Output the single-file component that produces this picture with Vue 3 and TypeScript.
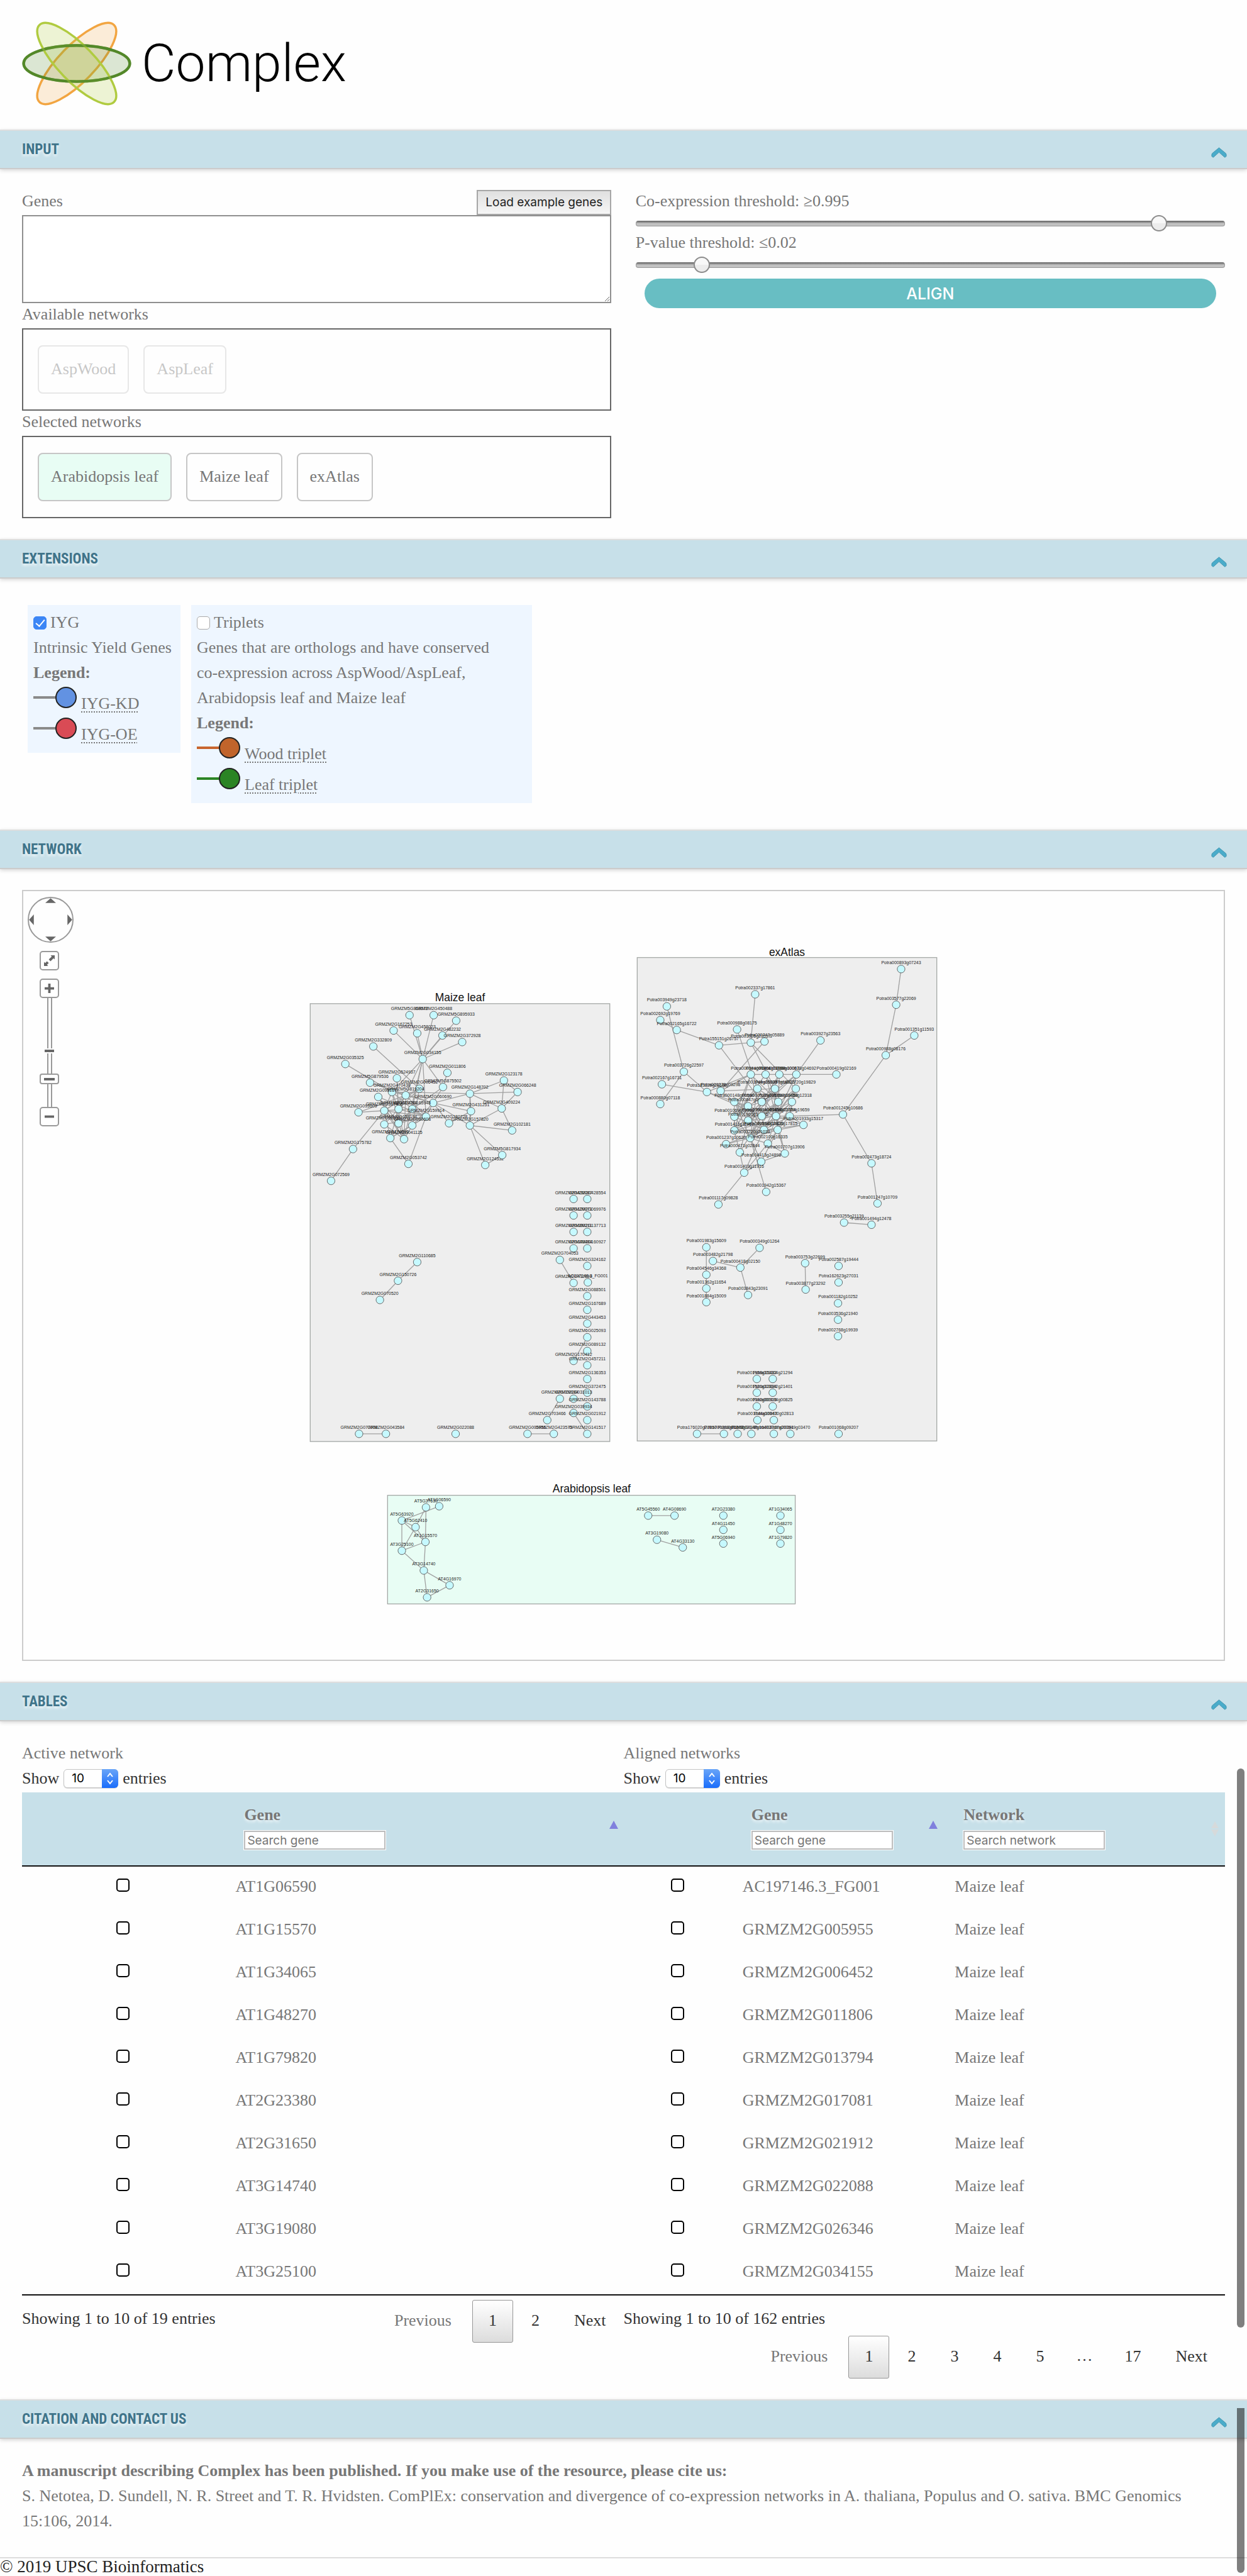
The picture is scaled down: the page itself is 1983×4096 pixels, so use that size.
<script setup lang="ts">
import { reactive, ref } from 'vue'

type Edge = [number, number]
interface GraphNode { x: number; y: number; label: string }
interface Panel {
  title: string
  titleX: number
  titleY: number
  x: number
  y: number
  width: number
  height: number
  fill: string
  nodes: GraphNode[]
  edges: { x1: number; y1: number; x2: number; y2: number }[]
}

const open = reactive({ input: true, extensions: true, network: true, tables: true, citation: true })
const genes = ref('')
const coexpression = ref(90)
const pvalue = ref(10)
const zoomLevel = ref(23)
const iyg = ref(true)
const triplets = ref(false)

const available = ['AspWood', 'AspLeaf']
const selected = [
  { name: 'Arabidopsis leaf', active: true },
  { name: 'Maize leaf', active: false },
  { name: 'exAtlas', active: false },
]

const activeGenes = [
  'AT1G06590', 'AT1G15570', 'AT1G34065', 'AT1G48270', 'AT1G79820',
  'AT2G23380', 'AT2G31650', 'AT3G14740', 'AT3G19080', 'AT3G25100',
]
const alignedGenes = [
  'AC197146.3_FG001', 'GRMZM2G005955', 'GRMZM2G006452', 'GRMZM2G011806', 'GRMZM2G013794',
  'GRMZM2G017081', 'GRMZM2G021912', 'GRMZM2G022088', 'GRMZM2G026346', 'GRMZM2G034155',
]

// A layout grid: origin on the canvas and number of grid steps per canvas unit.
interface Grid { ox: number; oy: number; sx: number; sy: number }

function buildPanel(
  title: string, fill: string, grid: Grid, box: number[], titleAt: number[],
  prefix: string, nodeText: string, edgeText: string,
): Panel {
  const px = (x: number) => Math.round(grid.ox + x / grid.sx)
  const py = (y: number) => Math.round(grid.oy + y / grid.sy)
  const nodes = nodeText.trim().split(/\s+/).map((item) => {
    const [x, y, id] = item.split(',')
    return { x: px(+x), y: py(+y), label: id.startsWith('=') ? id.slice(1) : prefix + id }
  })
  const edges = edgeText.trim().split(/\s+/).map((pair) => {
    const [a, b] = pair.split('-').map(Number) as Edge
    return { x1: nodes[a].x, y1: nodes[a].y, x2: nodes[b].x, y2: nodes[b].y }
  })
  const x = px(box[0])
  const y = py(box[1])
  return {
    title, fill, nodes, edges, x, y,
    titleX: px(titleAt[0]), titleY: py(titleAt[1]),
    width: px(box[2]) - x, height: py(box[3]) - y,
  }
}

const maize = buildPanel(
  'Maize leaf', '#eeeeee', { ox: 550, oy: 1780, sx: 2.751, sy: 3 },
  [41, 144, 1544, 2537], [793, 133], 'GRMZM',
  `540,207,5G868679 659,207,2G450488 774,236,5G895933 459,291,2G167253 577,305,2G458023
   705,317,2G482232 803,355,2G372928 358,378,2G332809 606,448,2G034155 217,474,2G035325
   728,523,2G011806 476,552,2G524937 340,575,5G879536 590,608,2G006452 707,599,5G875502
   452,628,2G470438 521,645,5G819204 383,653,2G098167 843,636,2G148702 1011,564,2G123178
   1080,628,2G066248 1002,717,2G409224 846,732,2G431251 657,686,2G060690 284,738,2G093609
   414,729,2G317406 484,720,2G013794 552,720,2G165948 622,761,2G159914 414,805,2G020317
   484,797,2G158194 552,810,2G080608 737,797,2G180728 843,810,2G157820 1054,836,2G102181
   444,880,2G174596 513,886,2G041125 257,938,2G175782 534,1020,2G053742 920,1025,2G124532
   1005,973,5G817934 146,1112,2G072569
   1362,1211,2G432087 1431,1211,2G428554 1362,1301,2G120071 1431,1301,2G069976
   1362,1391,2G080211 1431,1391,2G137713 1362,1481,2G043484 1431,1481,2G160927
   1293,1545,2G704053 1431,1577,2G324162 1362,1670,2G412899 1433,1667,=AC197146.3_FG001
   1431,1742,2G088501 1431,1818,2G167689 1431,1894,2G443453 1431,1969,6G025093
   1431,2044,2G089132 1362,2097,2G170412 1431,2120,2G457211 1431,2195,2G136353
   1431,2271,2G372475 1293,2305,2G702184 1362,2305,2G031013 1431,2347,2G143788
   1362,2382,2G039934 1431,2422,2G021912 1229,2422,2G703466 286,2497,2G077008
   420,2497,2G043584 771,2497,2G022088 1131,2497,2G005955 1264,2497,2G423575
   1431,2497,2G141517 577,1556,2G110685 481,1658,2G150726 390,1763,2G070520`,
  `0-8 1-8 2-8 3-8 4-8 5-8 6-8 7-13 8-14 8-28 8-26 8-15 8-36 8-27 9-15 10-14 14-27 14-23
   11-26 11-30 12-16 12-23 13-16 13-25 13-31 13-26 15-18 15-16 15-30 15-27 15-26 15-25
   16-23 16-26 16-25 16-28 16-36 17-28 17-30 17-36 18-19 18-20 18-22 18-21 18-23 18-33
   19-20 19-21 20-21 21-33 21-34 22-23 22-32 22-33 23-32 23-33 23-31 23-28 24-25 24-16
   25-28 25-30 25-36 25-35 25-27 26-28 26-35 26-36 26-29 27-30 27-35 27-28 28-29 28-31
   28-35 28-38 28-30 29-36 30-36 31-35 31-36 33-34 33-39 33-40 39-40 35-38 37-25 37-41
   50-52 57-59 63-68 66-74 69-70 72-73 75-76 76-77`,
)

const exAtlas = buildPanel(
  'exAtlas', '#eeeeee', { ox: 1150, oy: 1700, sx: 2.751, sy: 3 },
  [31, 133, 1531, 2776], [781, 124], 'Potra',
  `1353,194,000893g07243 621,333,002337g17861 180,400,003949g23718 145,475,002692g19769
   228,528,002165g16722 531,525,000988g08175 600,598,003926g23537 669,592,000747g05889
   441,612,155151g26757 949,586,003927g23563 1329,389,003577g22069 1420,557,001351g11593
   1276,667,000988g08176 265,757,003726g22597 155,824,002167g16731 145,932,000880g07118
   600,772,000344g01204 674,772,000401g01804 743,772,003198g10083 827,772,000678g04692
   1029,772,000419g02169 634,848,001944g15380 720,848,000357g18023 824,848,002720g19829
   379,867,183129g28160 448,861,001278g09298 518,920,000148g00590 587,946,000847g06830
   655,922,000522g03519 736,922,001719g14058 805,922,001468g12318 518,1001,001069g09208
   587,1022,001866g14936 656,998,000916g07459 725,998,003459g21654 794,998,002709g19659
   864,1048,001933g15317 518,1076,001411g11967 666,1074,002584g19420 735,1074,002320g17815
   597,1120,003220g21038 475,1152,001237g10620 685,1149,002100g16335 544,1196,000471g02844
   770,1202,001707g13906 653,1248,004413g24898 568,1309,001403g11916 677,1413,001942g15367
   437,1483,001117g09828 1061,990,001245g10686 1205,1257,002473g18724 1236,1477,001247g10709
   1068,1582,003255g21139 1205,1594,001494g12478 377,1715,001983g15609 411,1791,003482g21798
   645,1718,000349g01264 547,1828,000418g02150 377,1866,004546g34368 377,1942,001362g11654
   377,2017,001884g15009 586,1977,003843g23091 871,1802,003753g22699 874,1948,003877g23292
   1039,1817,002587g19444 1039,1907,162623g27031 1037,2023,001182g10252 1037,2113,003536g21940
   1037,2203,002768g19939 629,2435,001958g15432 711,2435,003304g21294 629,2511,001520g12834
   711,2511,003342g21401 629,2586,000392g00915 711,2586,000194g00825 632,2661,001244g10843
   714,2661,000470g02813 331,2737,176020g27857 464,2737,000383g01672 533,2737,001243g04140
   602,2737,002142g16402 714,2737,001267g20341 797,2737,000549g03470 1039,2737,001068g09207`,
  `0-10 10-12 11-12 12-49 49-35 49-50 50-51 52-53 1-6 2-13 3-4 4-8 8-6 6-7 5-21 8-28 7-25
   6-22 6-23 9-19 16-17 17-18 18-19 19-20 13-15 13-24 14-24 24-16 24-27 24-33 25-22 25-26
   25-16 16-31 16-37 16-29 16-33 17-31 17-34 17-29 18-33 18-39 18-28 19-28 19-34 19-32
   19-35 21-31 21-34 21-29 21-40 22-34 22-27 22-39 22-32 23-35 23-34 23-33 23-38 26-33
   26-32 26-37 26-40 26-38 26-34 27-28 27-34 27-37 27-38 28-34 28-37 28-40 29-33 29-39
   29-37 29-40 29-38 29-34 30-34 30-39 30-33 30-38 30-35 31-33 31-37 31-38 31-40 32-34
   32-38 32-43 33-38 33-40 33-34 33-43 34-35 34-39 34-40 34-42 34-44 35-38 35-37 35-39
   36-35 36-39 36-34 36-38 37-38 37-39 37-43 38-39 38-40 38-46 39-40 39-44 39-42 39-45
   40-42 40-45 40-47 41-38 41-40 42-44 43-46 45-44 46-45 46-48 42-46
   54-58 58-59 59-60 55-57 56-57 57-61 62-63 77-78`,
)

const arabidopsis = buildPanel(
  'Arabidopsis leaf', '#e8fdf4', { ox: 690, oy: 2690, sx: 2.01, sy: 3 },
  [33, 102, 1525, 697], [779, 88], 'AT',
  `172,168,5G37630 222,162,1G06590 84,241,5G63920 135,275,5G62410 170,357,1G15570
   84,404,3G25100 164,513,3G14740 259,595,4G16970 176,659,2G31650 987,214,5G45560
   1084,214,4G08690 1263,214,2G23380 1263,290,4G11450 1263,365,5G06940 1471,214,1G34065
   1471,290,1G48270 1471,365,1G79820 1019,345,3G19080 1114,386,4G33130`,
  '0-4 0-3 1-2 2-3 2-4 2-5 3-5 3-4 4-5 4-6 5-6 6-8 6-7 7-8 9-10 17-18',
)

const panels = [maize, exAtlas, arabidopsis]
</script>

<template>
  <div class="page">
    <header class="brand">
      <svg class="logo" viewBox="0 0 200 154" aria-hidden="true">
        <ellipse cx="100" cy="77" rx="98" ry="33" transform="rotate(-46 100 77)" fill="#f2a541" fill-opacity=".2" stroke="#f2a541" stroke-width="4" />
        <ellipse cx="100" cy="77" rx="97" ry="33" fill="#4f8726" fill-opacity=".2" stroke="#54882a" stroke-width="5" />
        <ellipse cx="100" cy="77" rx="98" ry="33" transform="rotate(46 100 77)" fill="#b0cb40" fill-opacity=".22" stroke="#b0cb40" stroke-width="4" />
        <ellipse cx="100" cy="77" rx="97" ry="33" fill="none" stroke="#54882a" stroke-width="5" stroke-opacity=".6" />
      </svg>
      <span class="wordmark">Complex</span>
    </header>

    <section>
      <div class="bar">
        <h2>INPUT</h2>
        <button type="button" class="toggle" aria-label="Collapse input" @click="open.input = !open.input">
          <svg viewBox="0 0 28 19"><path d="M14 1 26 11Q27 12 27 14V16Q26 18 24 18L14 9 4 18Q2 18 1 16V14Q1 12 2 11Z" /></svg>
        </button>
      </div>
      <div v-show="open.input" class="body columns">
        <div>
          <div class="genes-head">
            <label class="caption" for="genes">Genes</label>
            <button type="button" class="load">Load example genes</button>
          </div>
          <textarea id="genes" v-model="genes"></textarea>
          <div class="caption">Available networks</div>
          <div class="tray">
            <div v-for="name in available" :key="name" class="chip faded">{{ name }}</div>
          </div>
          <div class="caption">Selected networks</div>
          <div class="tray">
            <div v-for="net in selected" :key="net.name" class="chip" :class="{ active: net.active }">{{ net.name }}</div>
          </div>
        </div>
        <div>
          <label class="caption" for="coexp">Co-expression threshold: ≥0.995</label>
          <input id="coexp" v-model="coexpression" class="threshold" type="range" min="0" max="100">
          <label class="caption second" for="pval">P-value threshold: ≤0.02</label>
          <input id="pval" v-model="pvalue" class="threshold" type="range" min="0" max="100">
          <button type="button" class="align">ALIGN</button>
        </div>
      </div>
    </section>

    <section>
      <div class="bar">
        <h2>EXTENSIONS</h2>
        <button type="button" class="toggle" aria-label="Collapse extensions" @click="open.extensions = !open.extensions">
          <svg viewBox="0 0 28 19"><path d="M14 1 26 11Q27 12 27 14V16Q26 18 24 18L14 9 4 18Q2 18 1 16V14Q1 12 2 11Z" /></svg>
        </button>
      </div>
      <div v-show="open.extensions" class="body extensions">
        <div class="extension">
          <label class="option"><input v-model="iyg" type="checkbox" class="mac-check">IYG</label>
          <div>Intrinsic Yield Genes</div>
          <b>Legend:</b>
          <div class="legend">
            <svg viewBox="0 0 70 34"><path d="M0 17H40" stroke="#8a8a8a" stroke-width="4" /><circle cx="52" cy="17" r="16" fill="#6292e2" stroke="#222" stroke-width="2" /></svg>
            <span class="term">IYG-KD</span>
          </div>
          <div class="legend">
            <svg viewBox="0 0 70 34"><path d="M0 17H40" stroke="#8a8a8a" stroke-width="4" /><circle cx="52" cy="17" r="16" fill="#d94b55" stroke="#222" stroke-width="2" /></svg>
            <span class="term">IYG-OE</span>
          </div>
        </div>
        <div class="extension wide">
          <label class="option"><input v-model="triplets" type="checkbox" class="mac-check">Triplets</label>
          <div>Genes that are orthologs and have conserved<br>co-expression across AspWood/AspLeaf,<br>Arabidopsis leaf and Maize leaf</div>
          <b>Legend:</b>
          <div class="legend">
            <svg viewBox="0 0 70 34"><path d="M0 17H40" stroke="#c8652d" stroke-width="4" /><circle cx="52" cy="17" r="16" fill="#c1642b" stroke="#222" stroke-width="2" /></svg>
            <span class="term">Wood triplet</span>
          </div>
          <div class="legend">
            <svg viewBox="0 0 70 34"><path d="M0 17H40" stroke="#2b8424" stroke-width="4" /><circle cx="52" cy="17" r="16" fill="#2b8424" stroke="#222" stroke-width="2" /></svg>
            <span class="term">Leaf triplet</span>
          </div>
        </div>
      </div>
    </section>

    <section>
      <div class="bar">
        <h2>NETWORK</h2>
        <button type="button" class="toggle" aria-label="Collapse network" @click="open.network = !open.network">
          <svg viewBox="0 0 28 19"><path d="M14 1 26 11Q27 12 27 14V16Q26 18 24 18L14 9 4 18Q2 18 1 16V14Q1 12 2 11Z" /></svg>
        </button>
      </div>
      <div v-show="open.network" class="body">
        <div class="canvas">
          <svg class="graph" viewBox="42 1623 2188 1401">
            <g v-for="panel in panels" :key="panel.title">
              <rect :x="panel.x" :y="panel.y" :width="panel.width" :height="panel.height" :fill="panel.fill" stroke="#a4a8a6" stroke-width="1.5" />
              <text class="panel-title" :x="panel.titleX" :y="panel.titleY">{{ panel.title }}</text>
              <line v-for="(edge, i) in panel.edges" :key="i" v-bind="edge" stroke="#a0a0a0" stroke-width="1.5" />
              <g v-for="(node, i) in panel.nodes" :key="'n' + i">
                <circle :cx="node.x" :cy="node.y" r="7" fill="#c6f9ff" stroke="#555" stroke-width="1" />
                <text class="node-label" :x="node.x" :y="node.y - 9">{{ node.label }}</text>
              </g>
            </g>
          </svg>
          <div class="panzoom">
            <div class="pan">
              <button type="button" class="up" aria-label="Pan up"><svg viewBox="0 0 18 8"><path d="M9 0 18 8H0Z" /></svg></button>
              <button type="button" class="left" aria-label="Pan left"><svg viewBox="0 0 8 18"><path d="M0 9 8 0V18Z" /></svg></button>
              <button type="button" class="right" aria-label="Pan right"><svg viewBox="0 0 8 18"><path d="M8 9 0 0V18Z" /></svg></button>
              <button type="button" class="down" aria-label="Pan down"><svg viewBox="0 0 18 8"><path d="M9 8 0 0H18Z" /></svg></button>
            </div>
            <button type="button" class="square fit" aria-label="Fit network">
              <svg viewBox="0 0 18 18"><path d="M11 0H18V7L16 5 11 10 8 7 13 2ZM7 18H0V11L2 13 5 10 8 13 5 16Z" /></svg>
            </button>
            <div class="zoom">
              <button type="button" class="square" aria-label="Zoom in"><svg viewBox="0 0 16 16"><path d="M6 0H10V6H16V10H10V16H6V10H0V6H6Z" /></svg></button>
              <div class="rail">
                <input v-model="zoomLevel" type="range" min="0" max="100" aria-label="Zoom level">
                <i class="tick"></i>
              </div>
              <button type="button" class="square" aria-label="Zoom out"><svg viewBox="0 0 16 16"><path d="M0 6H16V10H0Z" /></svg></button>
            </div>
          </div>
        </div>
      </div>
    </section>

    <section class="tables">
      <div class="bar">
        <h2>TABLES</h2>
        <button type="button" class="toggle" aria-label="Collapse tables" @click="open.tables = !open.tables">
          <svg viewBox="0 0 28 19"><path d="M14 1 26 11Q27 12 27 14V16Q26 18 24 18L14 9 4 18Q2 18 1 16V14Q1 12 2 11Z" /></svg>
        </button>
      </div>
      <div v-show="open.tables" class="body halves">
        <div>
          <div class="caption">Active network</div>
          <label class="length">Show
            <span class="select"><select><option>10</option><option>25</option></select>
              <svg viewBox="0 0 26 30"><path d="M9 12 13 7 17 12M9 18 13 23 17 18" /></svg></span>
            entries</label>
          <table>
            <colgroup><col class="a1"><col></colgroup>
            <thead>
              <tr>
                <th></th>
                <th><div>Gene</div><input type="text" placeholder="Search gene" aria-label="Search gene"><svg class="sort" viewBox="0 0 14 26"><path d="M7 0 14 13H0Z" /></svg></th>
              </tr>
            </thead>
            <tbody>
              <tr v-for="gene in activeGenes" :key="gene">
                <td class="pick"><input type="checkbox" :aria-label="gene"></td>
                <td>{{ gene }}</td>
              </tr>
            </tbody>
          </table>
          <div class="table-foot">
            <div class="info">Showing 1 to 10 of 19 entries</div>
            <nav class="pager">
              <button type="button" class="muted">Previous</button>
              <button type="button" class="current">1</button>
              <button type="button">2</button>
              <button type="button">Next</button>
            </nav>
          </div>
        </div>
        <div>
          <div class="caption">Aligned networks</div>
          <label class="length">Show
            <span class="select"><select><option>10</option><option>25</option></select>
              <svg viewBox="0 0 26 30"><path d="M9 12 13 7 17 12M9 18 13 23 17 18" /></svg></span>
            entries</label>
          <table>
            <colgroup><col class="b1"><col class="b2"><col></colgroup>
            <thead>
              <tr>
                <th></th>
                <th><div>Gene</div><input type="text" placeholder="Search gene" aria-label="Search aligned gene"><svg class="sort" viewBox="0 0 14 26"><path d="M7 0 14 13H0Z" /></svg></th>
                <th><div>Network</div><input type="text" placeholder="Search network" aria-label="Search network"><svg class="sort both" viewBox="0 0 14 26"><path d="M7 1 13 12H1ZM7 25 13 14H1Z" /></svg></th>
              </tr>
            </thead>
            <tbody>
              <tr v-for="gene in alignedGenes" :key="gene">
                <td class="pick"><input type="checkbox" :aria-label="gene"></td>
                <td>{{ gene }}</td>
                <td>Maize leaf</td>
              </tr>
            </tbody>
          </table>
          <div class="table-foot">
            <div class="info">Showing 1 to 10 of 162 entries</div>
            <nav class="pager">
              <button type="button" class="muted">Previous</button>
              <button type="button" class="current">1</button>
              <button v-for="n in [2, 3, 4, 5]" :key="n" type="button">{{ n }}</button>
              <span>…</span>
              <button type="button">17</button>
              <button type="button">Next</button>
            </nav>
          </div>
        </div>
      </div>
      <div class="scroll-thumb"></div>
    </section>

    <div class="closing">
      <section>
        <div class="bar">
          <h2>CITATION AND CONTACT US</h2>
          <button type="button" class="toggle" aria-label="Collapse citation" @click="open.citation = !open.citation">
            <svg viewBox="0 0 28 19"><path d="M14 1 26 11Q27 12 27 14V16Q26 18 24 18L14 9 4 18Q2 18 1 16V14Q1 12 2 11Z" /></svg>
          </button>
        </div>
        <div v-show="open.citation" class="body citation">
          <b>A manuscript describing Complex has been published. If you make use of the resource, please cite us:</b>
          <div>S. Netotea, D. Sundell, N. R. Street and T. R. Hvidsten. ComPlEx: conservation and divergence of co-expression networks in A. thaliana, Populus and O. sativa. BMC Genomics 15:106, 2014.</div>
        </div>
      </section>
      <footer>© 2019 UPSC Bioinformatics</footer>
      <div class="scroll-thumb"></div>
    </div>
  </div>
</template>

<style>
body {
  background: #fefefe;
}
</style>

<style scoped>
.page {
  font: 26px/40px "Liberation Serif", serif;
  color: #777;
}
.page * {
  box-sizing: border-box;
}
button {
  font: inherit;
  color: inherit;
  cursor: pointer;
}
.brand {
  display: flex;
  align-items: center;
  gap: 16px;
  height: 206px;
  padding: 0 35px 4px;
}
.logo {
  width: 174px;
}
.wordmark {
  font: 300 84px/96px Roboto, "Liberation Sans", sans-serif;
  color: #000;
}
.bar {
  display: flex;
  align-items: center;
  justify-content: space-between;
  height: 63px;
  padding: 0 32px 0 35px;
  background: #c7e0e9;
  border-top: 2px solid #dedede;
  border-bottom: 2px solid #ccc;
  box-shadow: 0 2px 6px rgba(0, 0, 0, .16);
}
.bar h2 {
  margin: 0;
  font: 700 23px/40px "Roboto Condensed", "Open Sans Condensed", Roboto, sans-serif;
  color: #3f748a;
  text-shadow: 0 3px 4px rgba(255, 255, 255, .8);
}
.toggle {
  display: flex;
  margin-top: 9px;
  padding: 0;
  border: 0;
  background: none;
}
.toggle svg {
  width: 25px;
  height: 17px;
  fill: #4aacca;
  stroke: #3f90ab;
}
.body {
  padding: 33px 35px;
}
.columns {
  display: grid;
  grid-template-columns: 49fr 49fr;
  gap: 0 2%;
}
.caption {
  display: block;
  line-height: 36px;
  padding-bottom: 4px;
}
.genes-head {
  display: flex;
  justify-content: space-between;
}
.load {
  height: 40px;
  padding: 0 12px;
  border: 2px solid #a6a6a6;
  background: linear-gradient(#e0e0e0, #f6f6f6);
  color: #222;
  font: 19px/24px Inter, sans-serif;
}
textarea {
  display: block;
  width: 100%;
  height: 140px;
  border: 2px solid #8f8f8f;
  background: #fff;
  font: inherit;
  outline: 0;
}
.tray {
  display: flex;
  gap: 23px;
  height: 131px;
  padding: 25px 23px;
  border: 2px solid #666;
}
.chip {
  height: 77px;
  padding: 16px 19px;
  border: 2px solid #c6c6c6;
  border-radius: 8px;
  background: #fefefe;
}
.chip.faded {
  opacity: .4;
}
.chip.active {
  background: #e8fdf4;
}
.threshold {
  display: block;
  width: 100%;
  height: 26px;
  margin: 0;
  appearance: none;
  background: none;
}
.threshold::-webkit-slider-runnable-track {
  height: 9px;
  border-radius: 4px;
  border: 1px solid #999;
  border-top-color: #6e6e6e;
  background: linear-gradient(#6f6f6f, #c2c2c2 50%);
}
.threshold::-webkit-slider-thumb {
  appearance: none;
  width: 26px;
  height: 26px;
  margin-top: -10px;
  border: 2px solid #8c8c8c;
  border-radius: 50%;
  background: linear-gradient(#f8f8f8 50%, #ececec 50%);
}
.align {
  display: block;
  width: calc(100% - 28px);
  height: 47px;
  margin: 9px 14px 0;
  border: 0;
  border-radius: 24px;
  background: #68bec3;
  color: #fff;
  font: 500 25px/47px Inter, sans-serif;
}
.extensions {
  display: flex;
  align-items: flex-start;
  gap: 17px;
  padding: 42px 44px;
}
.extension {
  min-width: 243px;
  padding: 8px 9px 9px;
  background: #eef6ff;
}
.extension.wide {
  width: 542px;
}
.extension b {
  display: block;
}
.option {
  display: flex;
  align-items: center;
  gap: 6px;
}
.mac-check {
  appearance: none;
  width: 21px;
  height: 21px;
  margin: 0;
  border: 1px solid #aaa;
  border-radius: 5px;
  background: #fff;
}
.mac-check:checked {
  border-color: #3c86f5;
  background: #3c86f5;
}
.mac-check:checked::after {
  content: "";
  display: block;
  width: 6px;
  height: 12px;
  margin: 1px 6px;
  border: solid #fff;
  border-width: 0 2px 2px 0;
  transform: rotate(40deg);
}
.legend {
  display: flex;
  align-items: flex-end;
  gap: 6px;
  height: 49px;
}
.legend svg {
  width: 70px;
  height: 34px;
  margin-bottom: 13px;
}
.term {
  text-decoration: underline dotted 2px;
  text-underline-offset: 4px;
}
.canvas {
  position: relative;
  border: 2px solid #ccc;
}
.graph {
  display: block;
  width: 100%;
}
.panel-title {
  font: 20px "Liberation Sans", sans-serif;
  text-anchor: middle;
  fill: #111;
}
.node-label {
  font: 8px "Liberation Sans", sans-serif;
  text-anchor: middle;
  fill: #222;
}
.panzoom {
  position: absolute;
  left: 7px;
  top: 9px;
}
.pan {
  position: relative;
  width: 73px;
  height: 73px;
  border: 2px solid #999;
  border-radius: 50%;
}
.pan button {
  position: absolute;
  display: flex;
  padding: 0;
  border: 0;
  background: none;
}
.pan svg,
.square svg {
  fill: #666;
}
.up svg,
.down svg {
  width: 17px;
  height: 8px;
}
.left svg,
.right svg {
  width: 8px;
  height: 17px;
}
.up { top: 0; left: 26px; }
.down { bottom: 0; left: 26px; }
.left { left: 0; top: 26px; }
.right { right: 0; top: 26px; }
.square {
  display: flex;
  align-items: center;
  justify-content: center;
  width: 31px;
  height: 31px;
  padding: 0;
  border: 2px solid #999;
  border-radius: 5px;
  background: #fff;
}
.square svg {
  width: 15px;
  height: 15px;
}
.fit {
  margin: 13px 0 13px 19px;
}
.fit svg {
  width: 17px;
  height: 17px;
}
.zoom {
  width: 31px;
  margin-left: 19px;
}
.rail {
  position: relative;
  height: 173px;
}
.rail input {
  display: block;
  width: 31px;
  height: 173px;
  margin: 0;
  appearance: none;
  writing-mode: vertical-lr;
  direction: rtl;
  background: none;
}
.rail input::-webkit-slider-runnable-track {
  width: 8px;
  height: 173px;
  border: solid #999;
  border-width: 0 2px;
}
.rail input::-webkit-slider-thumb {
  appearance: none;
  width: 31px;
  height: 17px;
  margin-left: -14px;
  border: 2px solid #999;
  border-radius: 4px;
  background: linear-gradient(#666, #666) center / 17px 4px no-repeat #fff;
}
.tick {
  position: absolute;
  left: 8px;
  top: 80px;
  width: 15px;
  height: 8px;
  border: solid #fff;
  border-width: 2px 0;
  background: #666;
}
.tables,
.closing {
  position: relative;
}
.halves {
  display: grid;
  grid-template-columns: 1fr 1fr;
}
.length {
  display: flex;
  align-items: center;
  gap: 7px;
  line-height: 36px;
  padding-bottom: 4px;
  color: #333;
}
.select {
  position: relative;
  display: block;
  height: 30px;
}
.select select {
  display: block;
  width: 87px;
  height: 30px;
  padding: 0 12px;
  appearance: none;
  border: 1px solid #c4c4c4;
  border-radius: 6px;
  background: #fff;
  color: #000;
  font: 19px/28px Inter, sans-serif;
  box-shadow: 0 1px 1px rgba(0, 0, 0, .15);
}
.select svg {
  position: absolute;
  right: 0;
  top: 0;
  width: 26px;
  height: 30px;
  border-radius: 0 6px 6px 0;
  background: linear-gradient(#69a5f8, #1a6dfb);
  fill: none;
  stroke: #fff;
  stroke-width: 2;
  pointer-events: none;
}
table {
  width: 100%;
  table-layout: fixed;
  border-collapse: separate;
  border-spacing: 0;
  border-bottom: 2px solid #111;
}
.a1 { width: 33.6%; }
.b1 { width: 17.9%; }
.b2 { width: 35.3%; }
th {
  position: relative;
  padding: 16px 32px 20px;
  text-align: left;
  background: #c7e0e9;
  border-bottom: 2px solid #111;
  text-shadow: 0 3px 4px rgba(255, 255, 255, .8);
}
th input {
  display: block;
  width: 225px;
  height: 30px;
  margin: 5px 0;
  padding: 0 3px;
  border: 2px solid #bdbdbd;
  outline: 1px solid #fff;
  background: #fff;
  font: 19px/24px Inter, sans-serif;
}
th input::placeholder {
  color: #757575;
}
.sort {
  position: absolute;
  right: 9px;
  top: 45px;
  width: 14px;
  height: 26px;
  fill: #8080dd;
}
.sort.both {
  fill: #d6dadb;
}
td {
  padding: 12px 18px 16px;
}
.pick {
  text-align: center;
  padding-left: 0;
  padding-right: 0;
}
.pick input {
  appearance: none;
  width: 21px;
  height: 21px;
  margin: 0;
  border: 2px solid #000;
  border-radius: 5px;
  background: #fff;
}
.table-foot {
  display: flex;
  flex-wrap: wrap;
  justify-content: space-between;
  color: #333;
}
.info {
  padding-top: 17px;
}
.pager {
  display: flex;
  gap: 3px;
  margin-left: auto;
  padding-top: 7px;
  line-height: 64px;
}
.pager button {
  height: 68px;
  padding: 0 25px 2px;
  border: 1px solid transparent;
  border-radius: 3px;
  background: none;
}
.pager button:last-child {
  padding-right: 27px;
}
.pager span {
  padding: 0 22px;
}
.pager .muted {
  padding-right: 29px;
  color: #777;
}
.pager .current {
  border-color: #979797;
  background: linear-gradient(#fff, #dcdcdc);
}
.citation {
  padding-top: 31px;
  padding-bottom: 37px;
}
footer {
  border-top: 2px solid #ddd;
  color: #222;
  font-size: 27px;
  line-height: 27px;
}
.scroll-thumb {
  position: absolute;
  right: 4px;
  top: 138px;
  width: 12px;
  height: 889px;
  border-radius: 6px;
  background: rgba(0, 0, 0, .5);
}
.closing .scroll-thumb {
  top: 14px;
  bottom: 4px;
  height: auto;
  border-radius: 0 0 6px 6px;
}
</style>
